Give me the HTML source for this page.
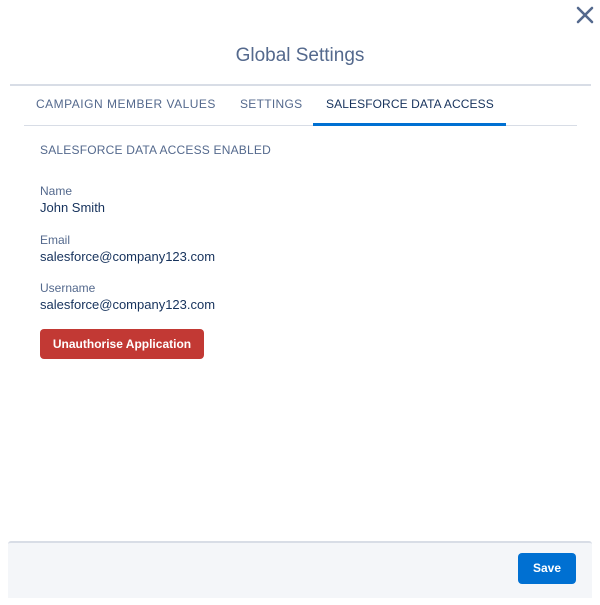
<!DOCTYPE html>
<html><head><style>
body{margin:0;width:600px;height:605px;background:#fff;font-family:"Liberation Sans",sans-serif;position:relative;overflow:hidden;color:#16325c}
.a{position:absolute}
.tab{position:absolute;top:97px;font-size:12px;letter-spacing:0.3px;color:#54698d}
.lbl{position:absolute;left:40px;font-size:12px;color:#54698d}
.val{position:absolute;left:40px;font-size:13px;color:#16325c}
</style></head><body>
<svg class="a" style="left:576px;top:6px" width="18" height="18" viewBox="0 0 18 18"><path d="M2 2L16 16M16 2L2 16" stroke="#54698d" stroke-width="2.6" stroke-linecap="round"/></svg>
<div class="a" style="left:0;width:600px;top:45px;text-align:center;font-size:19px;color:#54698d">Global Settings</div>
<div class="a" style="left:10px;width:581px;top:84px;height:2px;background:#d8dde6"></div>
<div class="tab" style="left:36px;letter-spacing:0.5px">CAMPAIGN MEMBER VALUES</div>
<div class="tab" style="left:240px">SETTINGS</div>
<div class="tab" style="left:326px;color:#16325c;letter-spacing:0.1px">SALESFORCE DATA ACCESS</div>
<div class="a" style="left:24px;width:553px;top:125px;height:1px;background:#d8dde6"></div>
<div class="a" style="left:313px;width:193px;top:123px;height:3px;background:#0070d2"></div>
<div class="a" style="left:40px;top:143px;font-size:12px;letter-spacing:0.2px;color:#54698d">SALESFORCE DATA ACCESS ENABLED</div>
<div class="lbl" style="top:184px">Name</div>
<div class="val" style="top:200px">John Smith</div>
<div class="lbl" style="top:233px">Email</div>
<div class="val" style="top:249px">salesforce@company123.com</div>
<div class="lbl" style="top:281px">Username</div>
<div class="val" style="top:297px">salesforce@company123.com</div>
<div class="a" style="left:40px;top:329px;width:164px;height:30px;background:#c23934;border-radius:4px;color:#fff;font-size:12px;font-weight:bold;line-height:30px;text-align:center">Unauthorise Application</div>
<div class="a" style="left:8px;width:584px;top:541px;height:55px;background:#f4f6f9;border-top:2px solid #d8dde6;border-radius:3px 3px 0 0"></div>
<div class="a" style="left:518px;top:553px;width:58px;height:31px;background:#0070d2;border-radius:4px;color:#fff;font-size:12px;font-weight:bold;line-height:31px;text-align:center">Save</div>
</body></html>
